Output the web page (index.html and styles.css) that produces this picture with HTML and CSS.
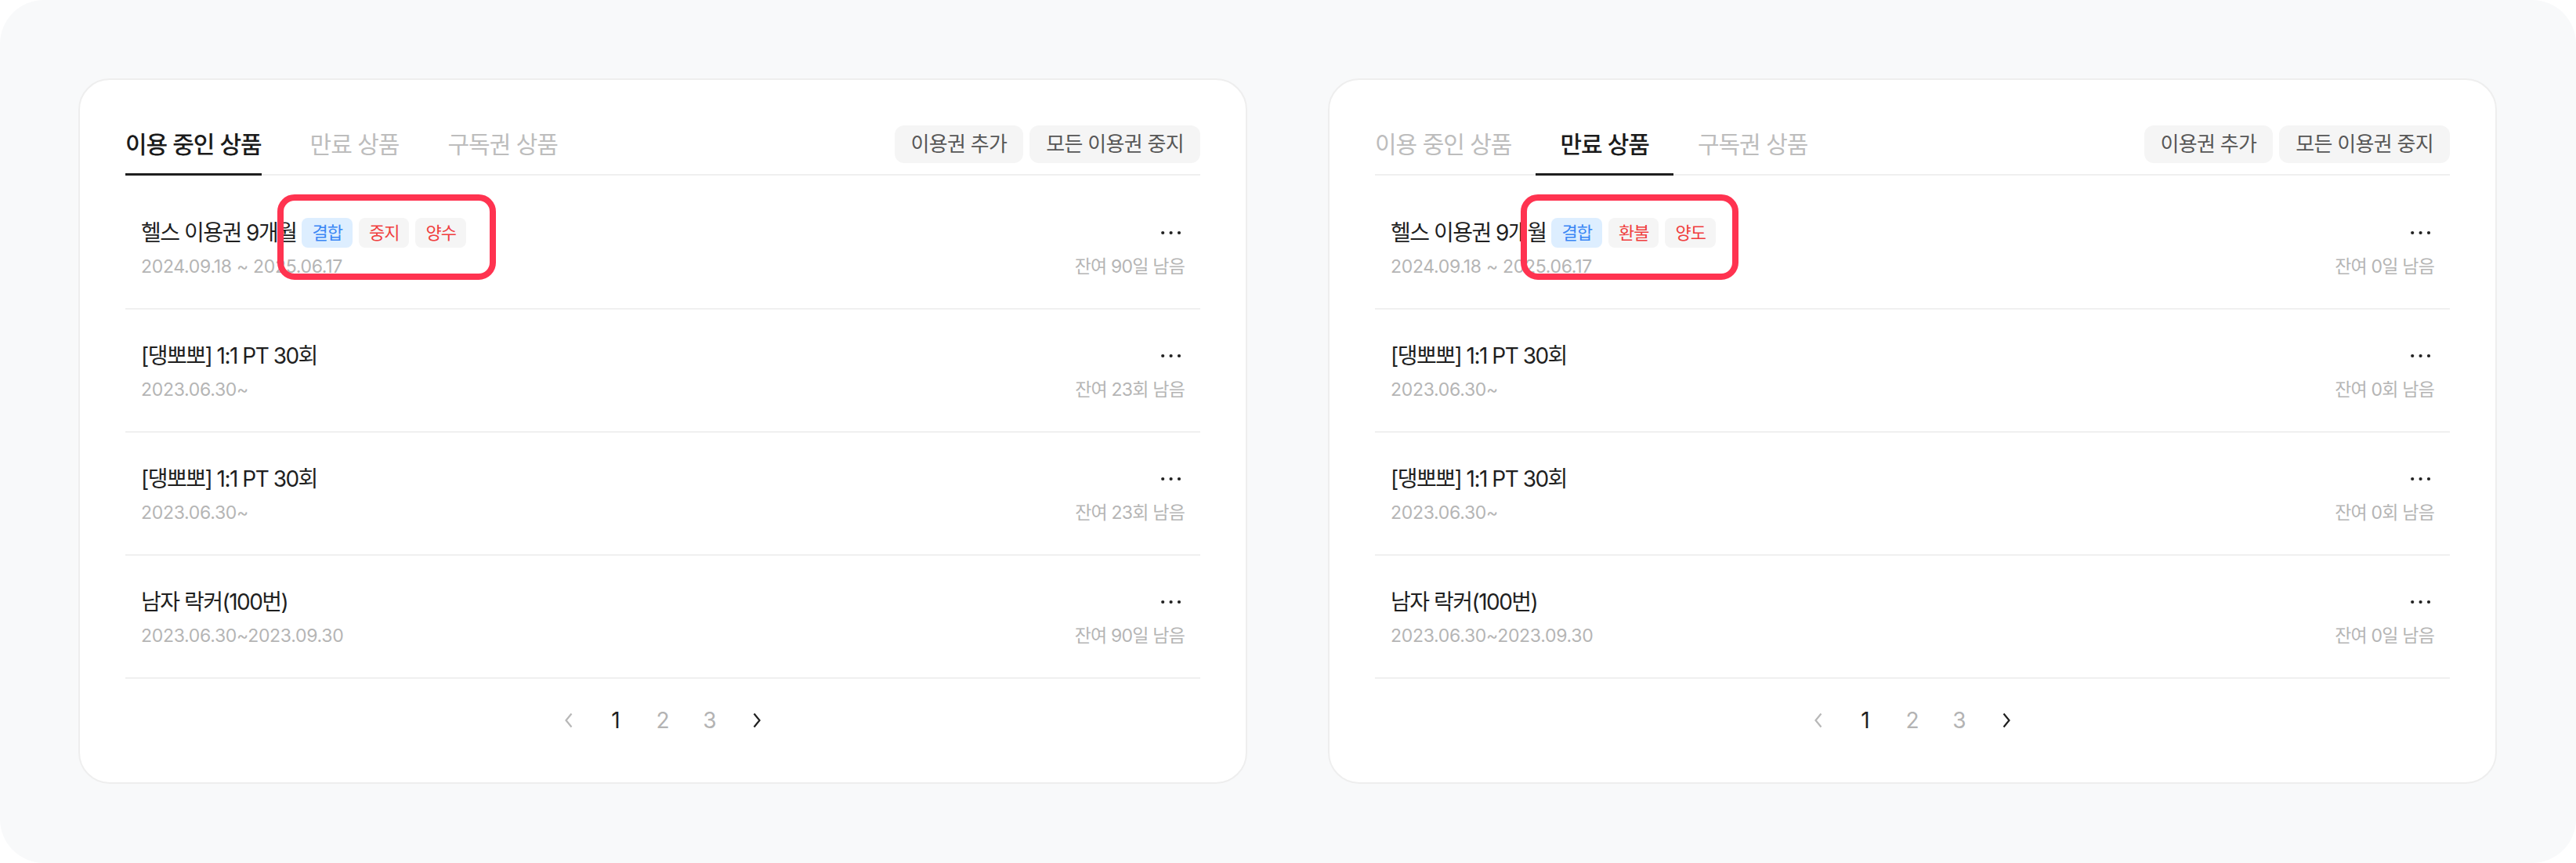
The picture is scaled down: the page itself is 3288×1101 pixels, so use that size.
FILE: index.html
```html
<!DOCTYPE html>
<html lang="ko">
<head>
<meta charset="utf-8">
<title>이용권</title>
<link rel="stylesheet" href="styles.css">
</head>
<body>
<div class="page">
  <section class="card">
    <header class="card-head">
      <nav class="tabs">
        <span class="tab tab-active">이용 중인 상품</span>
        <span class="tab">만료 상품</span>
        <span class="tab">구독권 상품</span>
      </nav>
      <div class="actions">
        <button class="btn">이용권 추가</button>
        <button class="btn">모든 이용권 중지</button>
      </div>
    </header>
    <ul class="list">
      <li class="row">
        <div class="row-main">
          <div class="title-line">
            <span class="title">헬스 이용권 9개월</span>
            <span class="badges">
              <span class="badge badge-blue">결합</span>
              <span class="badge">중지</span>
              <span class="badge">양수</span>
              <span class="annot"></span>
            </span>
          </div>
          <div class="date">2024.09.18 ~ 2025.06.17</div>
        </div>
        <div class="row-side">
          <span class="more"><svg width="30" height="8" viewBox="0 0 30 8"><circle cx="2.2" cy="4" r="2.1"/><circle cx="12.6" cy="4" r="2.1"/><circle cx="23" cy="4" r="2.1"/></svg></span>
          <span class="remain">잔여 90일 남음</span>
        </div>
      </li>
      <li class="row">
        <div class="row-main">
          <div class="title-line"><span class="title">[댕뽀뽀] 1:1 PT 30회</span></div>
          <div class="date">2023.06.30~</div>
        </div>
        <div class="row-side">
          <span class="more"><svg width="30" height="8" viewBox="0 0 30 8"><circle cx="2.2" cy="4" r="2.1"/><circle cx="12.6" cy="4" r="2.1"/><circle cx="23" cy="4" r="2.1"/></svg></span>
          <span class="remain">잔여 23회 남음</span>
        </div>
      </li>
      <li class="row">
        <div class="row-main">
          <div class="title-line"><span class="title">[댕뽀뽀] 1:1 PT 30회</span></div>
          <div class="date">2023.06.30~</div>
        </div>
        <div class="row-side">
          <span class="more"><svg width="30" height="8" viewBox="0 0 30 8"><circle cx="2.2" cy="4" r="2.1"/><circle cx="12.6" cy="4" r="2.1"/><circle cx="23" cy="4" r="2.1"/></svg></span>
          <span class="remain">잔여 23회 남음</span>
        </div>
      </li>
      <li class="row">
        <div class="row-main">
          <div class="title-line"><span class="title">남자 락커(100번)</span></div>
          <div class="date">2023.06.30~2023.09.30</div>
        </div>
        <div class="row-side">
          <span class="more"><svg width="30" height="8" viewBox="0 0 30 8"><circle cx="2.2" cy="4" r="2.1"/><circle cx="12.6" cy="4" r="2.1"/><circle cx="23" cy="4" r="2.1"/></svg></span>
          <span class="remain">잔여 90일 남음</span>
        </div>
      </li>
    </ul>
    <nav class="pager">
      <span class="pg pg-arrow"><svg width="14" height="22" viewBox="0 0 14 22"><path d="M10.5 2.5 L3.5 11 L10.5 19.5"/></svg></span>
      <span class="pg pg-current">1</span>
      <span class="pg">2</span>
      <span class="pg">3</span>
      <span class="pg pg-arrow pg-next"><svg width="14" height="22" viewBox="0 0 14 22"><path d="M3.5 2.5 L10.5 11 L3.5 19.5"/></svg></span>
    </nav>
  </section>

  <section class="card">
    <header class="card-head">
      <nav class="tabs">
        <span class="tab">이용 중인 상품</span>
        <span class="tab tab-active">만료 상품</span>
        <span class="tab">구독권 상품</span>
      </nav>
      <div class="actions">
        <button class="btn">이용권 추가</button>
        <button class="btn">모든 이용권 중지</button>
      </div>
    </header>
    <ul class="list">
      <li class="row">
        <div class="row-main">
          <div class="title-line">
            <span class="title">헬스 이용권 9개월</span>
            <span class="badges">
              <span class="badge badge-blue">결합</span>
              <span class="badge">환불</span>
              <span class="badge">양도</span>
              <span class="annot annot-alt"></span>
            </span>
          </div>
          <div class="date">2024.09.18 ~ 2025.06.17</div>
        </div>
        <div class="row-side">
          <span class="more"><svg width="30" height="8" viewBox="0 0 30 8"><circle cx="2.2" cy="4" r="2.1"/><circle cx="12.6" cy="4" r="2.1"/><circle cx="23" cy="4" r="2.1"/></svg></span>
          <span class="remain">잔여 0일 남음</span>
        </div>
      </li>
      <li class="row">
        <div class="row-main">
          <div class="title-line"><span class="title">[댕뽀뽀] 1:1 PT 30회</span></div>
          <div class="date">2023.06.30~</div>
        </div>
        <div class="row-side">
          <span class="more"><svg width="30" height="8" viewBox="0 0 30 8"><circle cx="2.2" cy="4" r="2.1"/><circle cx="12.6" cy="4" r="2.1"/><circle cx="23" cy="4" r="2.1"/></svg></span>
          <span class="remain">잔여 0회 남음</span>
        </div>
      </li>
      <li class="row">
        <div class="row-main">
          <div class="title-line"><span class="title">[댕뽀뽀] 1:1 PT 30회</span></div>
          <div class="date">2023.06.30~</div>
        </div>
        <div class="row-side">
          <span class="more"><svg width="30" height="8" viewBox="0 0 30 8"><circle cx="2.2" cy="4" r="2.1"/><circle cx="12.6" cy="4" r="2.1"/><circle cx="23" cy="4" r="2.1"/></svg></span>
          <span class="remain">잔여 0회 남음</span>
        </div>
      </li>
      <li class="row">
        <div class="row-main">
          <div class="title-line"><span class="title">남자 락커(100번)</span></div>
          <div class="date">2023.06.30~2023.09.30</div>
        </div>
        <div class="row-side">
          <span class="more"><svg width="30" height="8" viewBox="0 0 30 8"><circle cx="2.2" cy="4" r="2.1"/><circle cx="12.6" cy="4" r="2.1"/><circle cx="23" cy="4" r="2.1"/></svg></span>
          <span class="remain">잔여 0일 남음</span>
        </div>
      </li>
    </ul>
    <nav class="pager">
      <span class="pg pg-arrow"><svg width="14" height="22" viewBox="0 0 14 22"><path d="M10.5 2.5 L3.5 11 L10.5 19.5"/></svg></span>
      <span class="pg pg-current">1</span>
      <span class="pg">2</span>
      <span class="pg">3</span>
      <span class="pg pg-arrow pg-next"><svg width="14" height="22" viewBox="0 0 14 22"><path d="M3.5 2.5 L10.5 11 L3.5 19.5"/></svg></span>
    </nav>
  </section>
</div>
</body>
</html>
```

FILE: styles.css
```css
* {
  box-sizing: border-box;
}

html, body {
  margin: 0;
  background: #ffffff;
}

body {
  font-family: "Inter", "Noto Sans CJK KR", sans-serif;
  color: #1f1f1f;
}

.page {
  height: 1101px;
  padding: 100px 101px 101px 100px;
  background: #f8f9fa;
  border-radius: 56px;
  display: flex;
  gap: 103px;
  align-items: flex-start;
}

.card {
  flex: 1;
  min-width: 0;
  background: #ffffff;
  border: 2px solid #eeeeee;
  border-radius: 40px;
  padding: 58px 58px 59px;
}

.card-head {
  display: flex;
  justify-content: space-between;
  align-items: flex-start;
  border-bottom: 2px solid #efefef;
}

.tabs {
  display: flex;
  margin-bottom: -2px;
}

.tab {
  font-size: 30px;
  line-height: 48px;
  letter-spacing: -1px;
  padding: 0 31px 13px;
  border-bottom: 3px solid transparent;
  color: #bdbdbd;
  white-space: nowrap;
}

.tab:first-child {
  padding-left: 0;
  padding-right: 0;
  margin-right: 31px;
}

.tab-active {
  color: #1b1b1b;
  font-weight: 500;
  border-bottom-color: #1f1f1f;
}

.actions {
  display: flex;
  gap: 8px;
}

.btn {
  height: 48px;
  padding: 0 21px;
  border: 0;
  border-radius: 12px;
  background: #f5f5f5;
  color: #575757;
  font-family: inherit;
  font-size: 26px;
  line-height: 48px;
  letter-spacing: -0.7px;
  white-space: nowrap;
}

.list {
  list-style: none;
  margin: 0;
  padding: 14px 0 0;
}

.row {
  display: flex;
  justify-content: space-between;
  padding: 39px 20px 36px;
  border-bottom: 2px solid #f0f0f0;
}

.row-main,
.row-side {
  display: flex;
  flex-direction: column;
  gap: 6px;
}

.row-side {
  align-items: flex-end;
}

.title-line {
  display: flex;
  align-items: center;
  height: 40px;
  gap: 7px;
}

.title {
  font-size: 28px;
  line-height: 40px;
  letter-spacing: -1.5px;
  color: #1f1f1f;
  white-space: nowrap;
}

.badges {
  position: relative;
  display: flex;
  gap: 8px;
}

.badge {
  height: 38px;
  padding: 0 13px;
  border-radius: 8px;
  background: #f5f5f5;
  color: #f03e3e;
  font-size: 22px;
  line-height: 38px;
  letter-spacing: -1px;
}

.badge-blue {
  background: #ddeeff;
  color: #3a86f4;
}

.annot {
  position: absolute;
  left: -31px;
  top: -30px;
  width: 279px;
  height: 109px;
  border: 8px solid #ff3350;
  border-radius: 22px;
}

.annot-alt {
  left: -39px;
  width: 278px;
}

.date,
.remain {
  font-size: 23px;
  line-height: 34px;
  letter-spacing: -0.3px;
  color: #b5b5b5;
  white-space: nowrap;
}

.remain {
  letter-spacing: -0.8px;
}

.more {
  height: 40px;
  display: flex;
  align-items: center;
}

.more svg {
  fill: #222222;
}

.pager {
  display: flex;
  justify-content: center;
  gap: 20px;
  margin-top: 33px;
  height: 40px;
}

.pg {
  width: 40px;
  display: flex;
  align-items: center;
  justify-content: center;
  font-size: 28px;
  color: #b3b3b3;
}

.pg-current {
  color: #1f1f1f;
}

.pg-arrow svg {
  fill: none;
  stroke: #b8b8b8;
  stroke-width: 2.2;
}

.pg-next svg {
  stroke: #1f1f1f;
}
```
